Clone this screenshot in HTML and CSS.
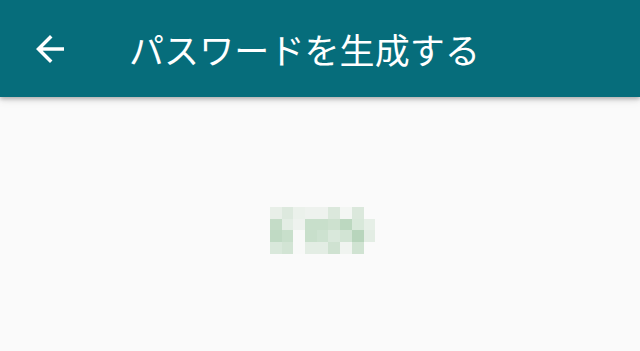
FILE: index.html
```html
<!DOCTYPE html>
<html lang="ja">
<head>
<meta charset="utf-8">
<link rel="stylesheet" href="styles.css">
</head>
<body>
<header class="toolbar">
  <button class="back" aria-label="戻る">
    <svg viewBox="0 0 24 24" width="42" height="42"><path fill="#fff" d="M20 11H7.83l5.59-5.59L12 4l-8 8 8 8 1.41-1.41L7.83 13H20v-2z"/></svg>
  </button>
  <h1 class="title">パスワードを生成する</h1>
</header>
<main class="content">
  <div class="mosaic">
    <i style="background:#e8efe8"></i><i style="background:#dde9de"></i><i style="background:#ebf1eb"></i><i style="background:#eef2ee"></i><i style="background:#eef2ee"></i><i style="background:#dbe8dc"></i><i style="background:#f3f6f3"></i><i style="background:#dbe8dc"></i><i style="background:#fafafa"></i>
    <i style="background:#c4dcc7"></i><i style="background:#e3ede4"></i><i style="background:#eef2ee"></i><i style="background:#c8dfcb"></i><i style="background:#c8dfcb"></i><i style="background:#cde1cf"></i><i style="background:#bcd8c0"></i><i style="background:#d8e8da"></i><i style="background:#e6efe7"></i>
    <i style="background:#c0dac4"></i><i style="background:#c8dfcb"></i><i style="background:#f8f9f8"></i><i style="background:#c8dfcb"></i><i style="background:#cde2d0"></i><i style="background:#d9e8db"></i><i style="background:#d2e4d4"></i><i style="background:#b8d5bc"></i><i style="background:#e3ede4"></i>
    <i style="background:#d9e8db"></i><i style="background:#d2e4d4"></i><i style="background:#f8f9f8"></i><i style="background:#e3ede4"></i><i style="background:#e3ede4"></i><i style="background:#cfe2d1"></i><i style="background:#f0f4f0"></i><i style="background:#d0e3d2"></i><i style="background:#fafafa"></i>
  </div>
</main>
</body>
</html>
```
FILE: styles.css
```css
html, body {
  margin: 0;
  padding: 0;
  width: 640px;
  height: 351px;
  overflow: hidden;
  background: #fafafa;
  font-family: "Noto Sans CJK JP", "Roboto", sans-serif;
}
.toolbar {
  height: 97px;
  background: #066d7b;
  display: flex;
  align-items: center;
  box-shadow: 0 2px 4px rgba(0,0,0,0.25), 0 4px 8px rgba(0,0,0,0.08);
  position: relative;
  z-index: 1;
}
.back {
  background: none;
  border: 0;
  padding: 0;
  margin-left: 29px;
  width: 42px;
  height: 42px;
  display: flex;
}
.title {
  margin: 0 0 0 58px;
  color: #fff;
  font-size: 35px;
  font-weight: 400;
  line-height: 1;
  letter-spacing: 0.1px;
}
.content {
  padding-top: 110px;
  padding-left: 270px;
}
.mosaic {
  display: grid;
  grid-template-columns: repeat(9, 11.7px);
  grid-auto-rows: 11.7px;
}
.mosaic i {
  display: block;
}
```
